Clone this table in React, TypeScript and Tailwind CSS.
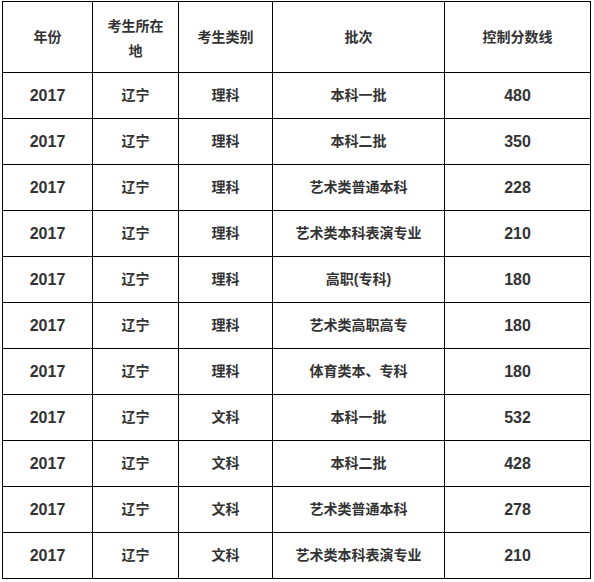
import React from "react";

const rows: [string, string, string, string, string][] = [
  ["2017", "辽宁", "理科", "本科一批", "480"],
  ["2017", "辽宁", "理科", "本科二批", "350"],
  ["2017", "辽宁", "理科", "艺术类普通本科", "228"],
  ["2017", "辽宁", "理科", "艺术类本科表演专业", "210"],
  ["2017", "辽宁", "理科", "高职(专科)", "180"],
  ["2017", "辽宁", "理科", "艺术类高职高专", "180"],
  ["2017", "辽宁", "理科", "体育类本、专科", "180"],
  ["2017", "辽宁", "文科", "本科一批", "532"],
  ["2017", "辽宁", "文科", "本科二批", "428"],
  ["2017", "辽宁", "文科", "艺术类普通本科", "278"],
  ["2017", "辽宁", "文科", "艺术类本科表演专业", "210"],
];

const font = { fontFamily: '"Liberation Sans", "Noto Sans CJK SC", sans-serif' };

export default function App() {
  return (
    <div className="w-[594px] h-[582px] bg-white overflow-hidden pt-[1px] pl-[2px]" style={font}>
      <div className="grid grid-cols-[90px_86px_94px_172px_146px] border-l border-t border-black text-[#333] w-max">
        <div className="h-[71px] flex items-center justify-center border-r border-b border-black text-[14px] font-bold">年份</div>
        <div className="h-[71px] flex items-center justify-center border-r border-b border-black text-[14px] font-bold text-center leading-[25px] pt-[3px]">
          考生所在<br />地
        </div>
        <div className="h-[71px] flex items-center justify-center border-r border-b border-black text-[14px] font-bold">考生类别</div>
        <div className="h-[71px] flex items-center justify-center border-r border-b border-black text-[14px] font-bold">批次</div>
        <div className="h-[71px] flex items-center justify-center border-r border-b border-black text-[14px] font-bold">控制分数线</div>
        {rows.map((r, i) => (
          <React.Fragment key={i}>
            <div className="h-[46px] flex items-center justify-center border-r border-b border-black text-[16px] font-bold">{r[0]}</div>
            <div className="h-[46px] flex items-center justify-center border-r border-b border-black text-[14px] font-bold">{r[1]}</div>
            <div className="h-[46px] flex items-center justify-center border-r border-b border-black text-[14px] font-bold">{r[2]}</div>
            <div className="h-[46px] flex items-center justify-center border-r border-b border-black text-[14px] font-bold">{r[3]}</div>
            <div className="h-[46px] flex items-center justify-center border-r border-b border-black text-[16px] font-bold">{r[4]}</div>
          </React.Fragment>
        ))}
      </div>
    </div>
  );
}
